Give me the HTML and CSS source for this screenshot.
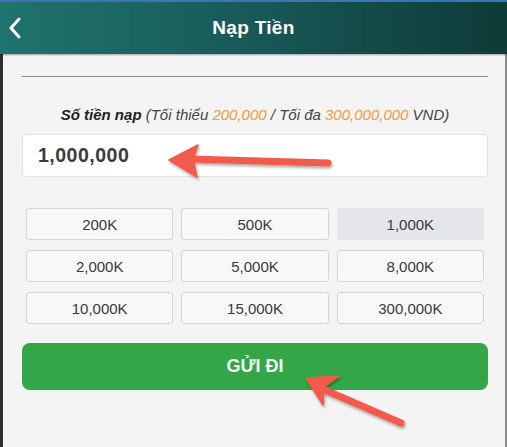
FILE: index.html
```html
<!DOCTYPE html>
<html lang="vi">
<head>
<meta charset="utf-8">
<title>Nạp Tiền</title>
<link rel="stylesheet" href="styles.css">
</head>
<body>
<div class="app">
  <header class="topbar">
    <svg class="back" width="14" height="22" viewBox="0 0 14 22"><path d="M11 2 L3 11 L11 20" fill="none" stroke="#fff" stroke-width="3" stroke-linecap="round" stroke-linejoin="round"/></svg>
    <h1 class="title">Nạp Tiền</h1>
  </header>
  <main class="page">
    <hr class="divider">
    <p class="label"><b>Số tiền nạp</b> (Tối thiểu <span class="hl">200,000</span> / Tối đa <span class="hl">300,000,000</span> VND)</p>
    <div class="amount">1,000,000</div>
    <div class="grid">
      <div class="chip">200K</div>
      <div class="chip">500K</div>
      <div class="chip active">1,000K</div>
      <div class="chip">2,000K</div>
      <div class="chip">5,000K</div>
      <div class="chip">8,000K</div>
      <div class="chip">10,000K</div>
      <div class="chip">15,000K</div>
      <div class="chip">300,000K</div>
    </div>
    <button class="submit">GỬI ĐI</button>
  </main>
  <svg class="arrows" width="507" height="447" viewBox="0 0 507 447">
    <defs>
      <filter id="sh" x="-20%" y="-20%" width="140%" height="140%">
        <feDropShadow dx="1" dy="2" stdDeviation="1.5" flood-color="#000" flood-opacity="0.35"/>
      </filter>
    </defs>
    <g fill="#f25a4b" stroke="#f25a4b" filter="url(#sh)">
      <line x1="190" y1="159" x2="328" y2="163" stroke-width="7" stroke-linecap="round"/>
      <polygon points="169,160 198,145 193,159 197,177" stroke-width="1.5" stroke-linejoin="round"/>
      <line x1="318" y1="387" x2="401" y2="423" stroke-width="7" stroke-linecap="round"/>
      <polygon points="306,378 339,376 324,387 323,405" stroke-width="1.5" stroke-linejoin="round"/>
    </g>
  </svg>
</div>
</body>
</html>
```
FILE: styles.css
```css
* { box-sizing: border-box; }
html, body { margin: 0; padding: 0; }
body {
  width: 507px;
  height: 447px;
  overflow: hidden;
  background: #f4f4f4;
  font-family: "Liberation Sans", Arial, sans-serif;
  color: #333;
}
.app {
  position: relative;
  width: 507px;
  height: 447px;
}
.topbar {
  height: 54px;
  border-top: 2px solid #3c74b4;
  background: linear-gradient(90deg, #20736e 0%, #185c5a 45%, #0e3a37 100%);
  display: flex;
  align-items: center;
  justify-content: center;
  position: relative;
  box-shadow: 0 1px 2px rgba(0,0,0,0.35);
}
.back {
  position: absolute;
  left: 8px;
  top: 15px;
}
.title {
  margin: 0;
  color: #fff;
  font-size: 19px;
  font-weight: bold;
  letter-spacing: 0.3px;
}
.page {
  height: 393px;
  border-left: 3px solid #2e2e2e;
  border-right: 2px solid #8c8c8c;
  padding: 0 17px 0 19px;
  display: flex;
  flex-direction: column;
}
.divider {
  margin: 22px 0 0;
  border: 0;
  border-top: 1.5px solid #8a8a8a;
}
.label {
  margin: 29px 0 0;
  text-align: center;
  font-style: italic;
  font-size: 15px;
  line-height: 18px;
  color: #444;
}
.label b { color: #222; }
.hl { color: #f29b3a; }
.amount {
  margin-top: 10px;
  height: 43px;
  background: #fff;
  border: 1px solid #e2e2e2;
  border-radius: 4px;
  padding-left: 15px;
  display: flex;
  align-items: center;
  font-size: 19.5px;
  font-weight: bold;
  color: #3c3c3c;
  letter-spacing: 0.5px;
}
.grid {
  margin: 31px 4px 0;
  display: grid;
  grid-template-columns: repeat(3, 1fr);
  column-gap: 8px;
  row-gap: 10px;
}
.chip {
  height: 32px;
  background: #f8f8f8;
  border: 1px solid #d6d6d6;
  border-radius: 3px;
  display: flex;
  align-items: center;
  justify-content: center;
  font-size: 15px;
  color: #3a3a3a;
}
.chip.active {
  background: #e4e6ea;
  border-color: #e4e6ea;
}
.submit {
  margin-top: 19px;
  height: 47px;
  border: 0;
  border-radius: 8px;
  background: #33a647;
  color: #f4fff4;
  font-family: "Liberation Sans", Arial, sans-serif;
  font-size: 18px;
  font-weight: bold;
}
.arrows {
  position: absolute;
  left: 0;
  top: 0;
  pointer-events: none;
}
```
